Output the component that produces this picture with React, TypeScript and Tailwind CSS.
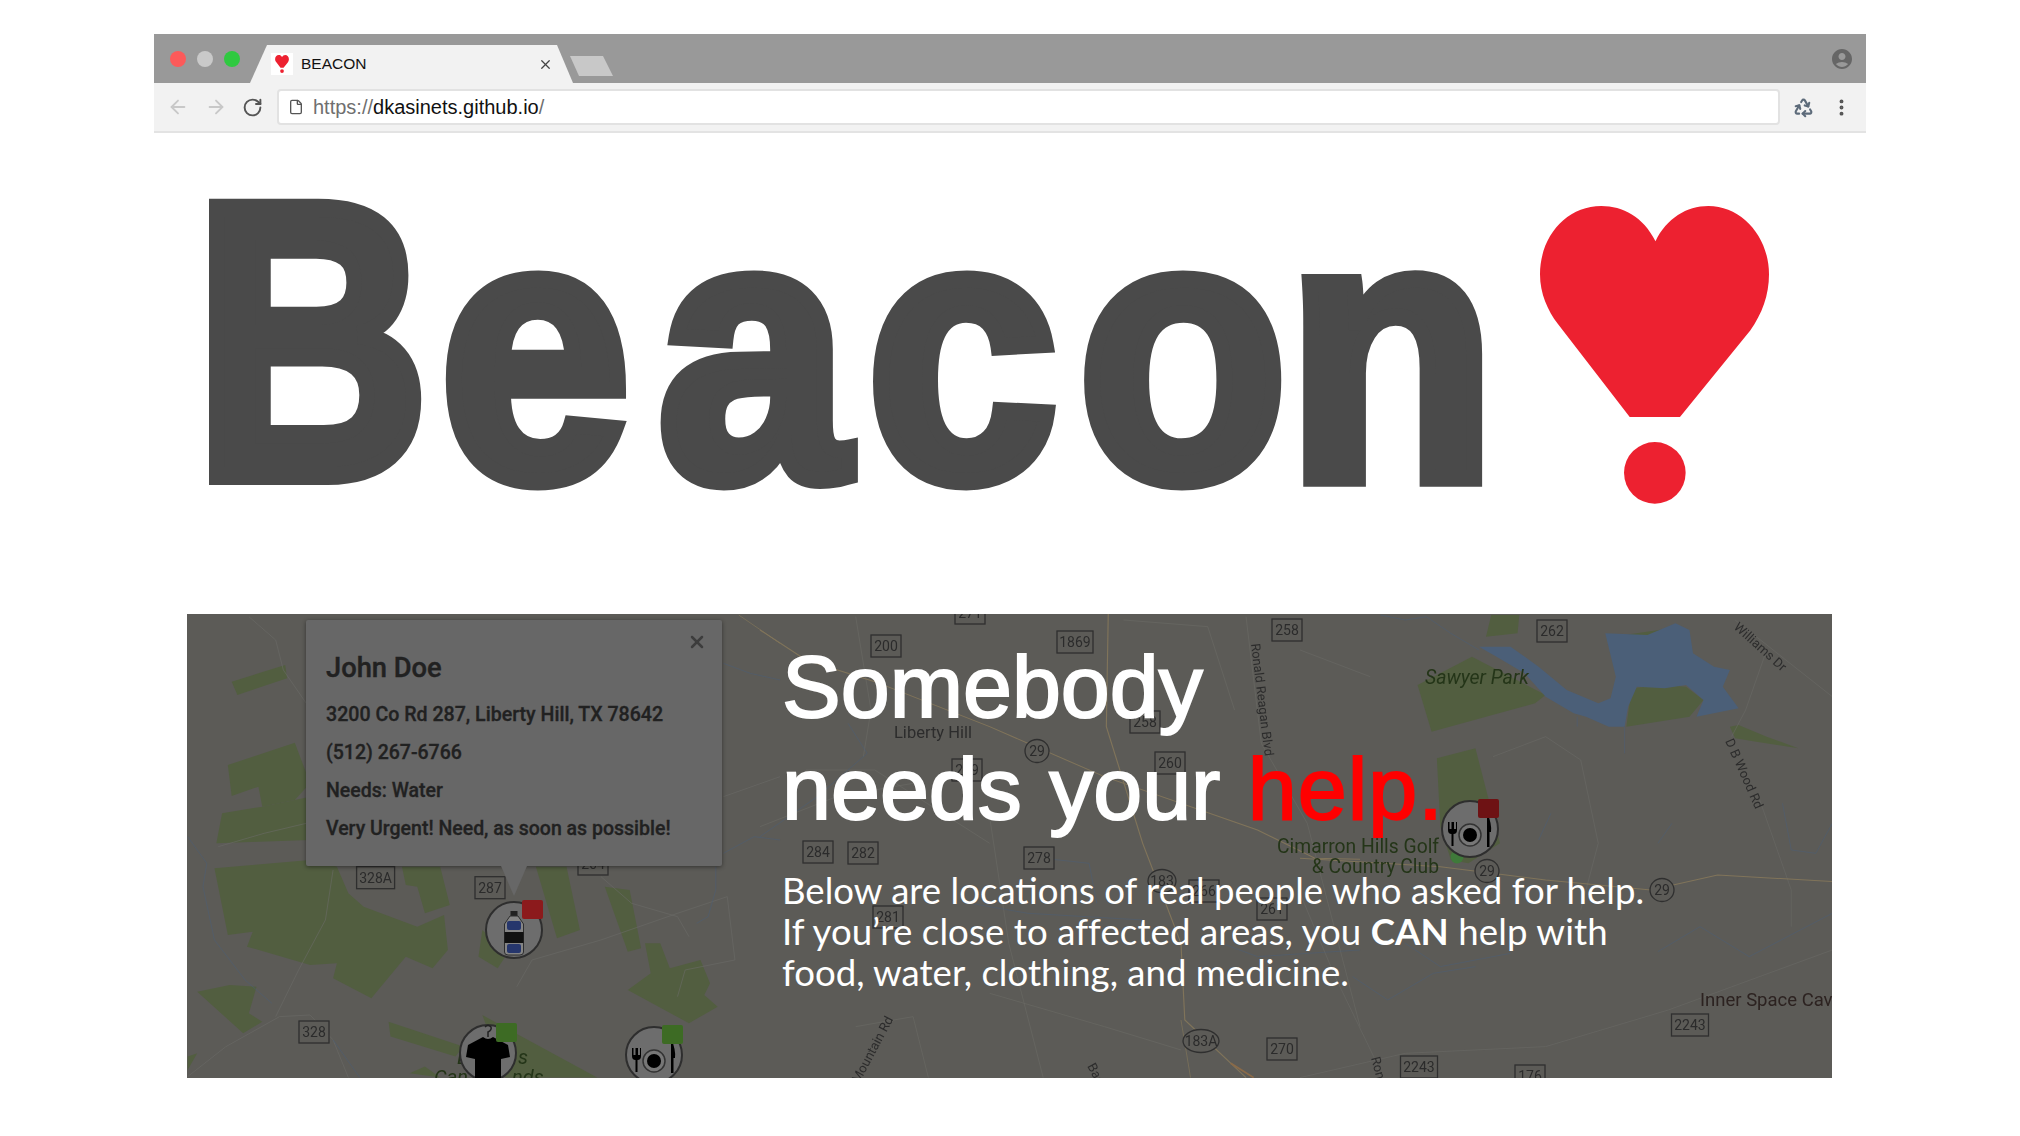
import React from "react";
import { ArrowLeft, ArrowRight, RotateCw, File, X, MoreVertical, Recycle } from "lucide-react";
import { MdAccountCircle } from "react-icons/md";

const GREEN = "#525e40";
const ROAD = "#6c6c68";
const YEL = "#80745a";
const BLUE = "#4b5f78";

const shields: [string, number, number, number?][] = [
  ["328A", 188.6, 263.7, 38], ["287", 303, 273.7, 30], ["264", 406, 250, 30], ["328", 127, 418, 30],
  ["271", 783, -1, 30], ["200", 699, 32, 30], ["1869", 888, 28, 36], ["258", 1100, 16, 30], ["258", 958, 108, 30],
  ["260", 983, 149, 30], ["279", 780, 156, 30], ["284", 631, 238, 30], ["282", 676, 239, 30], ["278", 852, 244, 30],
  ["266", 1017, 277, 30], ["261", 1085, 295, 30], ["281", 701, 303, 30], ["270", 1095, 435, 30],
  ["262", 1365, 17, 30], ["2243", 1503, 411, 37], ["2243", 1232, 453, 37], ["176", 1343, 462, 30],
];
const rounds: [string, number, number, number][] = [
  ["29", 850, 137, 12], ["183", 975, 267, 14], ["183A", 1014, 427, 18], ["29", 1300, 257, 12], ["29", 1475, 276, 12],
];

function Marker({ x, y, badge, kind }: { x: number; y: number; badge: string; kind: "water" | "food" | "shirt" }) {
  return (
    <g transform={`translate(${x} ${y})`}>
      <circle r="28" fill="#6d6d6d" stroke="#2e2e2e" strokeWidth="2" />
      {kind === "water" && (
        <g>
          <rect x="-3.5" y="-19" width="7" height="5" fill="#222" />
          <path d="M-4 -14 H4 L9.5 -6 V22 Q9.5 25 6 25 H-6 Q-9.5 25 -9.5 22 V-6 Z" fill="#858585" stroke="#2e2e2e" />
          <rect x="-9.5" y="2" width="19" height="11" fill="#111" />
          <rect x="-7" y="-9" width="14" height="9" rx="2" fill="#26366c" />
          <rect x="-7" y="14" width="14" height="9" rx="2" fill="#26366c" />
        </g>
      )}
      {kind === "food" && (
        <g>
          <circle cx="0" cy="6" r="11" fill="#777" stroke="#333" strokeWidth="1.5" />
          <circle cx="0" cy="6" r="7" fill="#000" />
          <path d="M-22 -7 V1 Q-22 5 -18.5 5 V17 H-16.5 V5 Q-13 5 -13 1 V-7 H-14 V0 H-16 V-7 H-18.5 V0 H-20.5 V-7 Z" fill="#000" />
          <path d="M17 -17 Q22 -5 21 3 H19.5 V18 H17 Z" fill="#000" />
        </g>
      )}
      {kind === "shirt" && (
        <g>
          <path d="M-5 -16 Q0 -12 5 -16 L20 -8 L22 4 L13 6 V30 H-13 V6 L-22 4 L-20 -8 Z" fill="#000" />
          <path d="M0 -16 V-21 Q4 -23 3 -26 Q0 -29 -3 -26" fill="none" stroke="#222" strokeWidth="1.5" />
        </g>
      )}
      <rect x="8" y="-30" width="21" height="19" rx="2" fill={badge} />
    </g>
  );
}

function MapArt() {
  return (
    <svg className="absolute inset-0 h-full w-full blur-[0.4px]" viewBox="0 0 1645 464">
      <rect width="1645" height="464" fill="#5c5b57" />
      <g transform="translate(-7 -4) scale(0.3827 0.3333)" fill={GREEN}>
        <polygon points="135,215 275,165 280,205 150,255" />
        <polygon points="125,465 300,398 340,520 300,570 215,590 205,530 135,558" />
        <polygon points="110,610 215,590 340,560 340,690 95,700" />
        <polygon points="90,775 340,750 410,770 440,850 480,890 620,950 690,915 700,1020 660,1075 590,1040 500,1165 400,1105 410,1060 340,1065 175,1010 190,965 125,975" />
        <polygon points="580,770 680,770 705,885 640,910 620,830 590,825" />
        <polygon points="930,770 1010,770 1045,960 985,985" />
        <polygon points="790,960 780,1040 830,1075 850,1040 820,990" />
        <polygon points="1110,830 1175,840 1205,1015 1170,1025" />
        <polygon points="1215,1000 1255,1000 1280,1075 1360,1050 1385,1120 1370,1155 1405,1190 1330,1240 1170,1140 1230,1090" />
        <polygon points="45,1145 130,1125 200,1130 180,1210 215,1235 165,1270" />
        <polygon points="790,1215 1090,1403 850,1403" />
        <polygon points="545,1235 740,1310 720,1340 550,1280" />
        <polygon points="600,1390 640,1370 680,1403" />
        <polygon points="20,1340 45,1330 20,1380" />
        <g fill="none" stroke={ROAD} strokeWidth="1.6">
          <polyline points="180,20 250,90 270,180 330,280" />
          <polyline points="20,1400 120,1310 260,1220 340,1215 400,1290 440,1403" />
          <polyline points="400,780 380,930 310,1080 250,1220" />
          <polyline points="100,710 220,670 330,640" />
          <polyline points="880,1130 920,1050 1100,990 1300,910 1430,860" />
          <polyline points="1420,560 1568,500" />
          <polyline points="1100,800 1180,880 1300,920 1330,980" />
          <polyline points="1430,860 1450,1050 1320,1080 1300,1160" />
        </g>
        <g fill="none" stroke={BLUE} strokeWidth="1.4">
          <polyline points="20,680 70,760 60,830 90,990 170,1110 240,1180" />
          <polyline points="400,1290 470,1403" />
          <polyline points="1400,770 1400,840 1380,920 1350,940" />
          <polyline points="1420,730 1500,680 1568,690" />
          <polyline points="1420,160 1490,190 1568,210" />
        </g>
        <polyline points="1460,15 1568,100" fill="none" stroke={YEL} strokeWidth="2" />
      </g>
      <g transform="translate(573 -4) scale(0.3827 0.3333)">
        <g fill="none" stroke={ROAD} strokeWidth="1.5">
          <polyline points="250,20 290,300 270,440" />
          <polyline points="1270,20 1310,400 1430,640 1568,1250" />
          <polyline points="600,620 650,1000 740,1403" />
          <polyline points="0,650 200,560 400,520" />
          <polyline points="120,480 300,480 600,700" />
          <polyline points="600,1150 900,1250 1100,1320" />
          <polyline points="250,1250 400,1220 440,1403" />
          <polyline points="950,30 1170,50 1240,300" />
        </g>
        <g fill="none" stroke={BLUE} strokeWidth="1.4">
          <polyline points="0,680 150,560 280,430 230,340" />
          <polyline points="700,740 860,760 880,880" />
          <polyline points="1160,980 1300,1040 1568,1020" />
          <polyline points="550,880 700,910 1000,930" />
        </g>
        <g fill="none" stroke={YEL} strokeWidth="3">
          <polyline points="0,60 120,150 300,215 600,350 900,500 1300,660 1450,745 1568,748" />
          <polyline points="910,10 905,350 1000,700 1100,1000 1110,1230 1270,1403" />
        </g>
        <polyline points="1100,1230 1125,1403" fill="none" stroke={YEL} strokeWidth="2" />
        <polyline points="1230,1360 1290,1403" fill="none" stroke="#8a6a48" strokeWidth="5" />
      </g>
      <g transform="translate(1113 -4) scale(0.3509 0.3333)">
        <polygon points="335,225 490,140 700,255 670,280 375,365" fill={GREEN} />
        <polygon points="530,80 545,15 625,15 620,70" fill={GREEN} />
        <polygon points="925,75 1085,50 1100,130 1000,200 930,170" fill={GREEN} />
        <polygon points="930,350 945,235 1035,225 1100,230 1150,270 1110,320" fill={GREEN} />
        <polygon points="390,445 500,415 570,700 480,760 430,750 400,650" fill={GREEN} />
        <polygon points="1225,350 1250,345 1330,380 1420,415 1300,395 1240,385" fill={GREEN} />
        <polygon fill={BLUE} points="510,110 600,110 680,170 760,240 850,280 885,265 900,200 870,70 990,75 1070,40 1110,60 1120,130 1180,170 1225,180 1205,230 1250,295 1130,320 1150,270 1100,225 1040,235 960,230 935,290 925,350 880,350 815,320 780,310 700,260 640,190 560,140" />
        <g fill="none" stroke={BLUE} strokeWidth="1.5">
          <polyline points="230,15 300,30 360,20 430,70 510,120" />
          <polyline points="790,320 790,350" />
          <polyline points="925,350 925,430" />
          <polyline points="1375,580 1400,720 1470,730 1517,640" />
          <polyline points="680,690 715,610" />
          <polyline points="1020,700 1060,640" />
          <polyline points="300,1000 400,1070 600,1030" />
          <polyline points="150,1100 250,1170 380,1090 500,1070" />
          <polyline points="1020,1025 1140,950 1280,1040 1517,910" />
        </g>
        <g fill="none" stroke={ROAD} strokeWidth="1.5">
          <polyline points="0,120 200,200" />
          <polyline points="1240,30 1517,260" />
          <polyline points="1330,120 1270,300 1230,380" />
          <polyline points="1310,570 1400,840 1400,950" />
          <polyline points="0,850 100,1100 210,1340 230,1403" />
          <polyline points="550,440 700,380 800,450 850,700 800,900" />
          <polyline points="0,1403 300,1330 700,1310 1050,1200 1517,1020" />
        </g>
        <g fill="none" stroke={YEL} strokeWidth="3">
          <polyline points="0,745 400,770 700,810 1000,840 1190,795 1517,815" />
        </g>
      </g>
      <g fontFamily="Roboto, sans-serif">
        {shields.map(([t, x, y, w], i) => (
          <g key={i}>
            <rect x={x - (w ?? 30) / 2} y={y - 11} width={w ?? 30} height="22" fill="#5c5b57" stroke="#2f2f2f" strokeWidth="1.3" />
            <text x={x} y={y + 5} textAnchor="middle" fontSize="14" fill="#2b2b2b">{t}</text>
          </g>
        ))}
        {rounds.map(([t, x, y, r], i) => (
          <g key={i}>
            <ellipse cx={x} cy={y} rx={r} ry="11.5" fill="#5c5b57" stroke="#2f2f2f" strokeWidth="1.3" />
            <text x={x} y={y + 5} textAnchor="middle" fontSize="14" fill="#2b2b2b">{t}</text>
          </g>
        ))}
        <text x="746" y="124" textAnchor="middle" fontSize="16.5" fill="#2c2c2c">Liberty Hill</text>
        <text x="1064" y="30" fontSize="12.8" fill="#2c2c2c" transform="rotate(83 1064 30)">Ronald Reagan Blvd</text>
        <text x="1090" y="239" fontSize="19.3" fill="#243518">Cimarron Hills Golf</text>
        <text x="1252" y="259" textAnchor="end" fontSize="19.3" fill="#243518">&amp; Country Club</text>
        <text x="1238" y="70" fontSize="19.5" fontStyle="italic" fill="#243518">Sawyer Park</text>
        <text x="1546" y="14" fontSize="13" fill="#2c2c2c" transform="rotate(42 1546 14)">Williams Dr</text>
        <text x="1538" y="127" fontSize="13" fill="#2c2c2c" transform="rotate(66 1538 127)">D B Wood Rd</text>
        <text x="1513" y="392" fontSize="18.5" fill="#2c2220">Inner Space Cavern</text>
        <text x="672" y="470" fontSize="13" fill="#2c2c2c" transform="rotate(-62 672 470)">Mountain Rd</text>
        <text x="900" y="452" fontSize="13" fill="#2c2c2c" transform="rotate(62 900 452)">Bagdad</text>
        <text x="1184" y="444" fontSize="13" fill="#2c2c2c" transform="rotate(75 1184 444)">Ronald</text>
        <text x="270" y="450" fontSize="20" fontStyle="italic" fill="#243518">B</text>
        <text x="331" y="450" fontSize="20" fontStyle="italic" fill="#243518">s</text>
        <text x="247" y="470" fontSize="20" fontStyle="italic" fill="#243518">Can</text>
        <text x="325" y="470" fontSize="20" fontStyle="italic" fill="#243518">nds</text>
      </g>
      <circle cx="1270" cy="243" r="6.5" fill="#3f7a3a" />
      <Marker x={327} y={316} badge="#8c1a1c" kind="water" />
      <Marker x={301} y={439} badge="#3d6b24" kind="shirt" />
      <Marker x={467} y={441} badge="#3d6b24" kind="food" />
      <Marker x={1283} y={215} badge="#6e1214" kind="food" />
    </svg>
  );
}

export default function App() {
  return (
    <div className="h-[1136px] w-[2020px] overflow-hidden bg-white pl-[154px] pt-[34px] [font-family:'Liberation_Sans',sans-serif]">
      <div className="w-[1712px]">
        {/* window title strip */}
        <div className="flex h-[49px] items-end bg-[#999999] pl-[16px] pr-[12px]">
          <div className="flex h-[38px] items-center gap-[11px] self-center">
            <span className="h-4 w-4 rounded-full bg-[#fc5a5a]" />
            <span className="h-4 w-4 rounded-full bg-[#c9c9c9]" />
            <span className="h-4 w-4 rounded-full bg-[#2fc940]" />
          </div>
          <div className="ml-[10px] flex h-[38px] w-[323px] items-center bg-[#f2f2f2] pl-[21px] pr-[20px] [clip-path:polygon(17px_0,307px_0,323px_100%,0_100%)]">
            <span className="flex h-[22px] w-[22px] items-center justify-center bg-white">
              <svg viewBox="122 78 684 890" className="h-[18px] w-[14px]">
                <path d="M467 183C430 110 370 78 305 78C200 78 122 170 122 282C122 340 145 390 175 430L390 708H540L750 450C785 400 806 345 806 282C806 170 725 78 625 78C560 78 500 115 467 183Z" fill="#ed2130" />
                <circle cx="465" cy="875" r="92" fill="#ed2130" />
              </svg>
            </span>
            <span className="ml-[8px] text-[15.5px] text-[#111]">BEACON</span>
            <X className="ml-auto h-[15px] w-[15px] text-[#444]" strokeWidth={2} />
          </div>
          <div className="mb-[7px] ml-[-3px] h-[20px] w-[43px] bg-[#c8c8c8] [clip-path:polygon(0_0,33px_0,43px_100%,9px_100%)]" />
          <MdAccountCircle className="mb-[12px] ml-auto h-[24px] w-[24px] text-[#666666]" />
        </div>
        {/* toolbar */}
        <div className="flex h-[50px] items-center border-b-2 border-[#e3e3e3] bg-[#f2f2f2]">
          <ArrowLeft className="ml-[13px] h-[22px] w-[22px] text-[#c8c8c8]" strokeWidth={2} />
          <ArrowRight className="ml-[16px] h-[22px] w-[22px] text-[#c8c8c8]" strokeWidth={2} />
          <RotateCw className="ml-[15px] h-[21px] w-[21px] text-[#555]" strokeWidth={2.2} />
          <div className="ml-[14px] flex h-[36px] w-[1503px] items-center rounded-[4px] border-2 border-[#e2e2e2] bg-white pl-[9px]">
            <File className="h-[16px] w-[16px] text-[#555]" strokeWidth={2} />
            <span className="ml-[9px] text-[20px] text-[#6f6f6f]">https://<span className="text-[#111]">dkasinets.github.io</span>/</span>
          </div>
          <Recycle className="ml-[13px] h-[21px] w-[21px] text-[#5d6b7a]" strokeWidth={2.4} />
          <MoreVertical className="ml-[17px] h-[21px] w-[21px] text-[#555]" strokeWidth={2.5} />
        </div>
        {/* logo */}
        <div className="flex h-[481px]">
          <div className="ml-[41px] mt-[13px] origin-top scale-y-[1.145] whitespace-nowrap text-[340px] font-bold leading-none text-[#4a4a4a] [font-kerning:none] [-webkit-text-stroke:16px_#4a4a4a]">
            <span className="inline-block origin-left scale-x-[0.95]">B</span>
            <span className="inline-block origin-[50%_85%] translate-y-[2px] scale-y-[0.95]">
              <span className="tracking-[29px]">e</span>
              <span className="tracking-[20px]">a</span>
              <span className="tracking-[22px]">c</span>
              <span className="tracking-[1px]">o</span>
              <span>n</span>
            </span>
          </div>
          <svg viewBox="122 78 684 890" preserveAspectRatio="none" className="ml-auto mr-[97px] mt-[73px] h-[298px] w-[229px]">
            <path d="M467 183C430 110 370 78 305 78C200 78 122 170 122 282C122 340 145 390 175 430L390 708H540L750 450C785 400 806 345 806 282C806 170 725 78 625 78C560 78 500 115 467 183Z" fill="#ed2130" />
            <circle cx="465" cy="875" r="92" fill="#ed2130" />
          </svg>
        </div>
        {/* map hero */}
        <div className="relative ml-[33px] flex h-[464px] w-[1645px] overflow-hidden">
          <MapArt />
          <div className="relative ml-[119px] mt-[6px] h-[246px] w-[416px] shrink-0 rounded-[2px] bg-[#676767] pl-[20px] pt-[32px] font-medium text-[#212121] shadow-[0_1px_4px_rgba(0,0,0,0.45)] [font-family:Roboto,sans-serif]">
            <X className="absolute right-[15px] top-[12px] h-[20px] w-[20px] text-[#3d3d3d]" strokeWidth={3} />
            <div className="text-[27.3px] leading-[32px] [-webkit-text-stroke:0.4px_#212121]">John Doe</div>
            <div className="mt-[12px] text-[19.6px] leading-[38px] [-webkit-text-stroke:0.3px_#212121]">3200 Co Rd 287, Liberty Hill, TX 78642</div>
            <div className="text-[19.5px] leading-[38px] [-webkit-text-stroke:0.3px_#212121]">(512) 267-6766</div>
            <div className="text-[19.5px] leading-[38px] [-webkit-text-stroke:0.3px_#212121]">Needs: Water</div>
            <div className="text-[19.5px] leading-[38px] [-webkit-text-stroke:0.3px_#212121]">Very Urgent! Need, as soon as possible!</div>
            <div className="absolute left-[195px] top-full h-[30px] w-[26px] bg-[#676767] [clip-path:polygon(0_0,100%_0,50%_100%)]" />
          </div>
          <div className="relative ml-[60px] mt-[22px] text-white">
            <div className="text-[88px] leading-[102px] [word-spacing:3px] [-webkit-text-stroke:2px_white]">
              Somebody
              <br />
              needs your <span className="tracking-[1px] text-[#ff0000] [-webkit-text-stroke:2px_#ff0000]">help.</span>
            </div>
            <div className="mt-[30px] whitespace-nowrap text-[36.6px] leading-[41px] [font-family:Lato,sans-serif]">
              Below are locations of real people who asked for help.
              <br />
              <span className="tracking-[0.1px]">If you’re close to affected areas, you <b>CAN</b> help with</span>
              <br />
              food, water, clothing, and medicine.
            </div>
          </div>
        </div>
      </div>
    </div>
  );
}
